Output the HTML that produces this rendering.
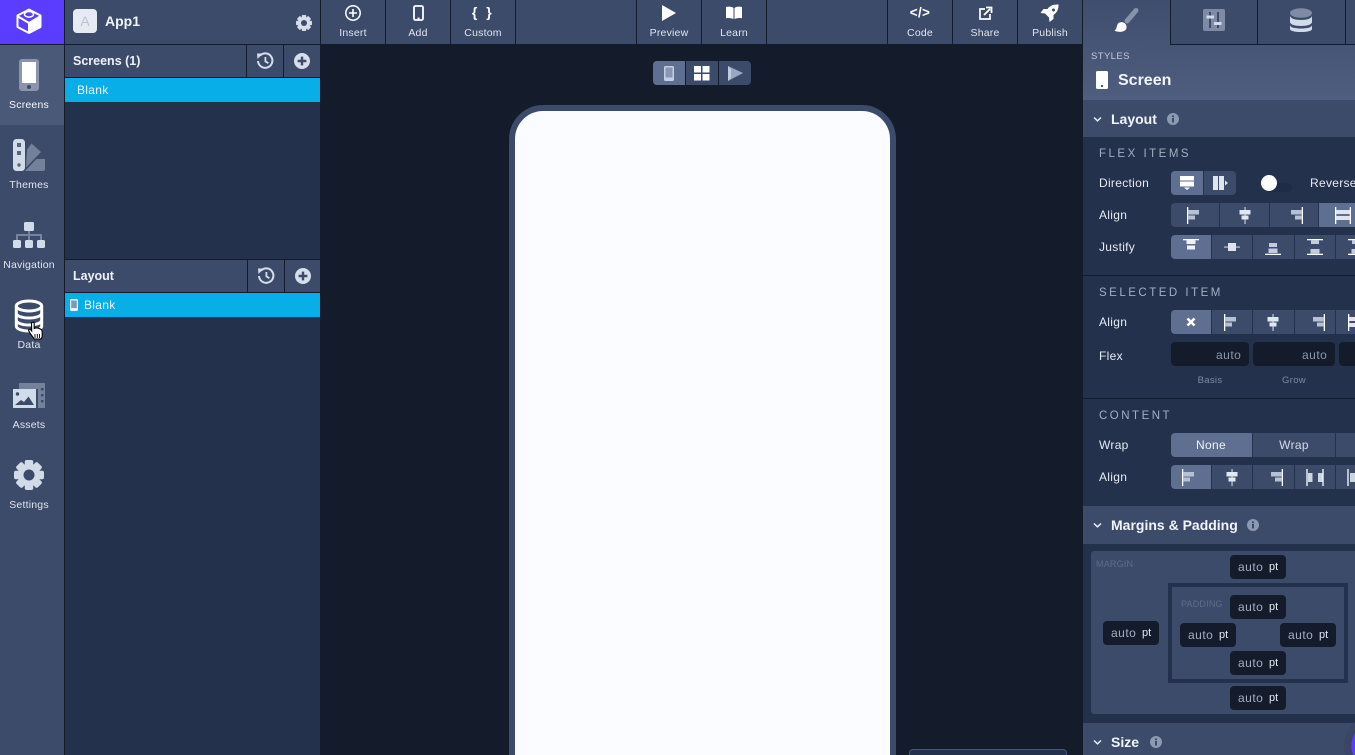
<!DOCTYPE html>
<html><head><meta charset="utf-8"><title>App1</title>
<style>
*{box-sizing:border-box;margin:0;padding:0}
html,body{width:1355px;height:755px;overflow:hidden;background:#141b2b;font-family:"Liberation Sans",sans-serif}
div{position:absolute}
#root{left:0;top:0;width:1355px;height:755px;overflow:hidden;background:#141b2b}
.t{white-space:nowrap;color:#e4e9f2;font-size:11px;line-height:14px;height:14px}
.c{transform:translateX(-50%)}
.l{font-size:10.5px;letter-spacing:.2px;color:#dfe5ee}
.h{font-size:12.5px;font-weight:bold;color:#eef1f6;line-height:16px;height:16px}
.hh{font-size:14px;font-weight:bold;color:#f1f4f8;line-height:18px;height:18px}
.lab{font-size:12px;color:#e6eaf1;letter-spacing:.3px;line-height:16px;height:16px}
.cap{font-size:11.5px;color:#a4aec2;letter-spacing:2.5px;line-height:14px;height:14px}
.sep{background:#141b2b}
.s{background:#3d4b6b;height:24px}
.a{background:#5f6f92}
.in{background:#141b2b;border-radius:4px;height:24px}
.u{width:56px;height:24px;background:#141b2b;border-radius:4px}
.u b{position:absolute;left:8px;top:5px;font:12px/14px "Liberation Sans",sans-serif;letter-spacing:.5px;color:#a4aec2}
.u i{position:absolute;left:39px;top:6px;font:normal 11px/13px "Liberation Sans",sans-serif;color:#e4e9f2}
svg{position:absolute;left:0;top:0}
</style></head><body>
<div id="root">

<!-- left rail -->
<div style="left:0;top:0;width:64px;height:755px;background:#3d4b6b"></div>
<div style="left:64px;top:0;width:1px;height:755px;background:#141b2b"></div>
<div style="left:0;top:0;width:64px;height:44px;background:#5b3dff"></div>
<div class="sep" style="left:0;top:44px;width:64px;height:1px"></div>
<div style="left:0;top:45px;width:64px;height:80px;background:#4b5978"></div>
<div class="t l c" style="left:29px;top:98px;color:#f6f8fb">Screens</div>
<div class="t l c" style="left:29px;top:178px">Themes</div>
<div class="t l c" style="left:29px;top:258px">Navigation</div>
<div class="t l c" style="left:29px;top:338px">Data</div>
<div class="t l c" style="left:29px;top:418px">Assets</div>
<div class="t l c" style="left:29px;top:498px">Settings</div>

<!-- secondary panel -->
<div style="left:65px;top:0;width:255px;height:755px;background:#24314c"></div>
<div style="left:65px;top:0;width:255px;height:44px;background:#3d4b6b"></div>
<div class="sep" style="left:65px;top:44px;width:255px;height:1px"></div>
<div style="left:320px;top:0;width:1px;height:755px;background:#141b2b"></div>
<div class="t c" style="left:85px;top:13px;font-size:14px;line-height:16px;height:16px;color:#b9c4d6;z-index:3">A</div>
<div class="hh" style="left:105px;top:12px;font-size:14px">App1</div>

<div style="left:65px;top:45px;width:255px;height:32px;background:#3d4b6b"></div>
<div class="sep" style="left:65px;top:77px;width:255px;height:1px"></div>
<div class="sep" style="left:246px;top:45px;width:1px;height:32px"></div>
<div class="sep" style="left:283px;top:45px;width:1px;height:32px"></div>
<div class="h" style="left:73px;top:53px">Screens (1)</div>
<div style="left:65px;top:78px;width:255px;height:24px;background:#08aee8"></div>
<div class="t" style="left:77px;top:83px;font-size:12px;color:#eef8fd;letter-spacing:.3px">Blank</div>

<div class="sep" style="left:65px;top:259px;width:255px;height:1px"></div>
<div style="left:65px;top:260px;width:255px;height:32px;background:#3d4b6b"></div>
<div class="sep" style="left:65px;top:292px;width:255px;height:1px"></div>
<div class="sep" style="left:247px;top:260px;width:1px;height:32px"></div>
<div class="sep" style="left:284px;top:260px;width:1px;height:32px"></div>
<div class="h" style="left:73px;top:268px">Layout</div>
<div style="left:65px;top:293px;width:255px;height:24px;background:#08aee8"></div>
<div class="t" style="left:84px;top:298px;font-size:12px;color:#eef8fd;letter-spacing:.3px">Blank</div>

<!-- toolbar -->
<div style="left:321px;top:0;width:762px;height:44px;background:#3d4b6b"></div>
<div class="sep" style="left:385px;top:0;width:1px;height:44px"></div>
<div class="sep" style="left:450px;top:0;width:1px;height:44px"></div>
<div class="sep" style="left:515px;top:0;width:1px;height:44px"></div>
<div class="sep" style="left:636px;top:0;width:1px;height:44px"></div>
<div class="sep" style="left:701px;top:0;width:1px;height:44px"></div>
<div class="sep" style="left:766px;top:0;width:1px;height:44px"></div>
<div class="sep" style="left:887px;top:0;width:1px;height:44px"></div>
<div class="sep" style="left:952px;top:0;width:1px;height:44px"></div>
<div class="sep" style="left:1017px;top:0;width:1px;height:44px"></div>
<div class="sep" style="left:1082px;top:0;width:1px;height:44px"></div>
<div class="t l c" style="left:353px;top:26px">Insert</div>
<div class="t l c" style="left:418px;top:26px">Add</div>
<div class="t l c" style="left:483px;top:26px">Custom</div>
<div class="t l c" style="left:669px;top:26px">Preview</div>
<div class="t l c" style="left:734px;top:26px">Learn</div>
<div class="t l c" style="left:920px;top:26px">Code</div>
<div class="t l c" style="left:985px;top:26px">Share</div>
<div class="t l c" style="left:1050px;top:26px">Publish</div>
<div class="t c" style="left:483px;top:4px;font-size:14px;line-height:16px;height:16px;font-weight:bold;color:#fff;letter-spacing:2.5px;z-index:3">{ }</div>
<div class="t c" style="left:920px;top:5px;font-size:13.5px;line-height:16px;height:16px;font-weight:bold;color:#fff;letter-spacing:.3px;z-index:3">&lt;/&gt;</div>

<!-- canvas -->
<div style="left:653px;top:61px;width:98px;height:24px;background:#3d4b6b;border-radius:4px"></div>
<div class="a" style="left:653px;top:61px;width:32px;height:24px;border-radius:4px 0 0 4px"></div>
<div class="sep" style="left:685px;top:61px;width:1px;height:24px"></div>
<div class="sep" style="left:718px;top:61px;width:1px;height:24px"></div>
<div style="left:509px;top:105px;width:387px;height:650px;background:#fbfcff;border:6px solid #3d4b6b;border-bottom:0;border-radius:34px 34px 0 0"></div>
<div style="left:909px;top:749px;width:158px;height:6px;background:#24314c;border:1px solid #46557a;border-bottom:0;border-radius:4px 4px 0 0"></div>

<!-- right panel -->
<div style="left:1083px;top:0;width:272px;height:755px;background:#24314c"></div>
<div style="left:1083px;top:0;width:272px;height:100px;background:linear-gradient(#3f4d6e,#4f5d7e)"></div>
<div style="left:1171px;top:0;width:184px;height:44px;background:#3d4b6b"></div>
<div class="sep" style="left:1170px;top:0;width:1px;height:45px"></div>
<div class="sep" style="left:1170px;top:44px;width:185px;height:1px"></div>
<div class="sep" style="left:1257px;top:0;width:1px;height:44px"></div>
<div class="sep" style="left:1345px;top:0;width:1px;height:44px"></div>
<div class="t" style="left:1091px;top:50px;font-size:9.5px;letter-spacing:.4px;color:#c2cad9">STYLES</div>
<div class="t" style="left:1118px;top:71px;height:20px;line-height:20px;font-size:16px;font-weight:bold;color:#f1f4f8">Screen</div>

<div style="left:1083px;top:100px;width:272px;height:37px;background:#3d4b6b"></div>
<div class="hh" style="left:1111px;top:110px">Layout</div>
<div class="cap" style="left:1099px;top:147px">FLEX ITEMS</div>
<div class="lab" style="left:1099px;top:175px">Direction</div>
<div class="lab" style="left:1099px;top:207px">Align</div>
<div class="lab" style="left:1099px;top:239px">Justify</div>
<div class="lab" style="left:1310px;top:175px">Reverse</div>
<div class="s" style="left:1171px;top:171px;width:65px;border-radius:4px"></div>
<div class="a" style="left:1171px;top:171px;width:32px;height:24px;border-radius:4px 0 0 4px"></div>
<div class="sep" style="left:1203px;top:171px;width:1px;height:24px;background:#24314c"></div>
<div class="s" style="left:1171px;top:203px;width:48px;border-radius:4px 0 0 4px"></div>
<div class="s" style="left:1220px;top:203px;width:49px"></div>
<div class="s" style="left:1270px;top:203px;width:48px"></div>
<div class="s a" style="left:1319px;top:203px;width:36px"></div>
<div class="s a" style="left:1171px;top:235px;width:40px;border-radius:4px 0 0 4px"></div>
<div class="s" style="left:1212px;top:235px;width:40px"></div>
<div class="s" style="left:1253px;top:235px;width:41px"></div>
<div class="s" style="left:1295px;top:235px;width:40px"></div>
<div class="s" style="left:1336px;top:235px;width:19px"></div>
<div class="sep" style="left:1083px;top:275px;width:272px;height:1px"></div>

<div class="cap" style="left:1099px;top:286px">SELECTED ITEM</div>
<div class="lab" style="left:1099px;top:314px">Align</div>
<div class="lab" style="left:1099px;top:348px">Flex</div>
<div class="s a" style="left:1171px;top:310px;width:40px;border-radius:4px 0 0 4px"></div>
<div class="s" style="left:1212px;top:310px;width:40px"></div>
<div class="s" style="left:1253px;top:310px;width:41px"></div>
<div class="s" style="left:1295px;top:310px;width:40px"></div>
<div class="s" style="left:1336px;top:310px;width:19px"></div>
<div class="in" style="left:1171px;top:342px;width:78px"></div>
<div class="in" style="left:1253px;top:342px;width:82px"></div>
<div class="in" style="left:1339px;top:342px;width:16px;border-radius:4px 0 0 4px"></div>
<div class="t" style="left:1216px;top:348px;font-size:12px;letter-spacing:.5px;color:#8c97ad">auto</div>
<div class="t" style="left:1302px;top:348px;font-size:12px;letter-spacing:.5px;color:#8c97ad">auto</div>
<div class="t c" style="left:1210px;top:374px;font-size:9.5px;letter-spacing:.3px;color:#7f8aa3">Basis</div>
<div class="t c" style="left:1294px;top:374px;font-size:9.5px;letter-spacing:.3px;color:#7f8aa3">Grow</div>
<div class="sep" style="left:1083px;top:398px;width:272px;height:1px"></div>

<div class="cap" style="left:1099px;top:409px">CONTENT</div>
<div class="lab" style="left:1099px;top:437px">Wrap</div>
<div class="lab" style="left:1099px;top:469px">Align</div>
<div class="s a" style="left:1171px;top:433px;width:81px;border-radius:4px 0 0 4px"></div>
<div class="s" style="left:1253px;top:433px;width:82px"></div>
<div class="s" style="left:1336px;top:433px;width:19px"></div>
<div class="t c" style="left:1211px;top:438px;font-size:12px;letter-spacing:.3px;color:#eef1f6">None</div>
<div class="t c" style="left:1294px;top:438px;font-size:12px;letter-spacing:.3px;color:#d4dae6">Wrap</div>
<div class="s a" style="left:1171px;top:465px;width:40px;border-radius:4px 0 0 4px"></div>
<div class="s" style="left:1212px;top:465px;width:40px"></div>
<div class="s" style="left:1253px;top:465px;width:41px"></div>
<div class="s" style="left:1295px;top:465px;width:40px"></div>
<div class="s" style="left:1336px;top:465px;width:19px"></div>

<div style="left:1083px;top:506px;width:272px;height:38px;background:#3d4b6b"></div>
<div class="hh" style="left:1111px;top:516px">Margins &amp; Padding</div>
<div style="left:1091px;top:551px;width:264px;height:163px;background:#3d4b6b;border-radius:3px 0 0 3px"></div>
<div class="t" style="left:1096px;top:557px;font-size:9px;letter-spacing:.2px;color:#5f6c88">MARGIN</div>
<div style="left:1168px;top:583px;width:180px;height:100px;border:4px solid #24314c"></div>
<div class="t" style="left:1181px;top:597px;font-size:9px;letter-spacing:.2px;color:#5f6c88">PADDING</div>
<div class="u" style="left:1230px;top:555px"><b>auto</b><i>pt</i></div>
<div class="u" style="left:1103px;top:621px"><b>auto</b><i>pt</i></div>
<div class="u" style="left:1230px;top:595px"><b>auto</b><i>pt</i></div>
<div class="u" style="left:1180px;top:623px"><b>auto</b><i>pt</i></div>
<div class="u" style="left:1280px;top:623px"><b>auto</b><i>pt</i></div>
<div class="u" style="left:1230px;top:651px"><b>auto</b><i>pt</i></div>
<div class="u" style="left:1230px;top:686px"><b>auto</b><i>pt</i></div>

<div style="left:1083px;top:723px;width:272px;height:32px;background:#3d4b6b"></div>
<div class="t" style="left:1111px;top:733px;height:18px;line-height:18px;font-size:14px;font-weight:bold;color:#f1f4f8">Size</div>

<!-- icons -->
<svg width="1355" height="755" viewBox="0 0 1355 755" style="z-index:2;overflow:hidden">
<defs>
<symbol id="al" viewBox="0 0 18 18"><rect x="1" y="0" width="1.300" height="17" fill="#fff"/><rect x="2" y="3" width="11" height="4.500" fill="#b6c1d3"/><rect x="2" y="8.500" width="7" height="4" fill="#b6c1d3"/></symbol>
<symbol id="ac" viewBox="0 0 18 18"><rect x="8.400" y="0" width="1.300" height="17" fill="#b6c1d3"/><rect x="3.500" y="3" width="11" height="4.500" fill="#e2e8f1"/><rect x="5.500" y="8.500" width="7" height="4" fill="#e2e8f1"/></symbol>
<symbol id="ar" viewBox="0 0 18 18"><rect x="15.700" y="0" width="1.300" height="17" fill="#fff"/><rect x="5" y="3" width="11" height="4.500" fill="#b6c1d3"/><rect x="9" y="8.500" width="7" height="4" fill="#b6c1d3"/></symbol>
<symbol id="as" viewBox="0 0 18 18"><rect x="1" y="0" width="1.300" height="17" fill="#fff"/><rect x="15.700" y="0" width="1.300" height="17" fill="#fff"/><rect x="2" y="3" width="14" height="4" fill="#dfe5ee"/><rect x="2" y="9" width="14" height="4" fill="#dfe5ee"/></symbol>
<symbol id="jt" viewBox="0 0 18 18"><rect x="1" y="1" width="16" height="1.300" fill="#fff"/><rect x="4.500" y="2" width="9" height="4" fill="#eef1f6"/><rect x="5" y="7.500" width="8" height="4" fill="#eef1f6"/></symbol>
<symbol id="jc" viewBox="0 0 18 18"><rect x="1" y="8.400" width="16" height="1.300" fill="#b6c1d3"/><rect x="5" y="5" width="8" height="8" fill="#dfe5ee"/></symbol>
<symbol id="jb" viewBox="0 0 18 18"><rect x="1" y="15.700" width="16" height="1.300" fill="#fff"/><rect x="5" y="5" width="8" height="4" fill="#c2ccdb"/><rect x="4.500" y="10.500" width="9" height="4.500" fill="#c2ccdb"/></symbol>
<symbol id="jb2" viewBox="0 0 18 18"><rect x="1" y="1" width="16" height="1.300" fill="#fff"/><rect x="1" y="15.700" width="16" height="1.300" fill="#fff"/><rect x="5" y="2" width="8" height="4" fill="#c2ccdb"/><rect x="4.500" y="11" width="9" height="4.500" fill="#c2ccdb"/></symbol>
<symbol id="hist" viewBox="0 0 18 18"><path d="M4 3.600A7.200 7.200 0 1 1 2 9" fill="none" stroke="#d6deea" stroke-width="2"/><path d="M1 1.500 L6.800 1.500 L1.500 7Z" fill="#d6deea"/><path d="M9.400 5v4.400l3 1.800" fill="none" stroke="#d6deea" stroke-width="1.800"/></symbol>
<symbol id="plus" viewBox="0 0 16 16"><circle cx="8" cy="8" r="8" fill="#d6deea"/><path d="M8 3.600v8.800M3.600 8h8.800" stroke="#3d4b6b" stroke-width="2.400"/></symbol>
<symbol id="gear" viewBox="-16 -16 32 32"><g fill="currentColor"><circle r="12"/><rect x="-4.500" y="-16" width="9" height="32" rx="2"/><rect x="-4.500" y="-16" width="9" height="32" rx="2" transform="rotate(45)"/><rect x="-4.500" y="-16" width="9" height="32" rx="2" transform="rotate(90)"/><rect x="-4.500" y="-16" width="9" height="32" rx="2" transform="rotate(135)"/></g></symbol>
<symbol id="info" viewBox="0 0 12 12"><circle cx="6" cy="6" r="6" fill="#8d99b2"/><rect x="5" y="5" width="2" height="4.500" fill="#3d4b6b"/><rect x="5" y="2.400" width="2" height="1.800" fill="#3d4b6b"/></symbol>
</defs>

<!-- logo -->
<g fill="none" stroke="#fff" stroke-width="2" stroke-linejoin="round">
<path d="M29 9.500 40.500 15.500V27L29 33 17.500 27V15.500Z"/><path d="M18 16.500 29 23 40 16.500M29 23V33"/>
</g>
<path d="M29 23 40.500 16V27L29 33Z" fill="#fff"/>
<ellipse cx="29" cy="14.300" rx="4.500" ry="2.800" fill="none" stroke="#fff" stroke-width="1.500"/>

<!-- Screens -->
<rect x="19" y="59" width="20" height="32" rx="3" fill="#8c94ac"/><rect x="22" y="62" width="14" height="21" fill="#fff"/><circle cx="29" cy="87" r="2" fill="#3d4b6b"/>
<!-- Themes -->
<path d="M27 149.500 31.500 143.500 41 152 38 155 26 167.500z" fill="#74819b"/><path d="M36.500 159H45V169a2 2 0 0 1-2 2H25z" fill="#74819b"/>
<rect x="13" y="139" width="12" height="32" rx="3.500" fill="#d2dbe8"/><rect x="17" y="143" width="4" height="4" fill="#55637f"/><rect x="17" y="151" width="4" height="4" fill="#55637f"/><circle cx="19" cy="165" r="1.700" fill="#55637f"/>
<!-- Navigation -->
<path d="M29 230v10M17 241v-6h24v6" fill="none" stroke="#78849d" stroke-width="2"/>
<rect x="24" y="222" width="10" height="9" rx="1.500" fill="#d2dbe8"/><rect x="13" y="240" width="8" height="8" rx="1.500" fill="#d2dbe8"/><rect x="25" y="240" width="8" height="8" rx="1.500" fill="#d2dbe8"/><rect x="37" y="240" width="8" height="8" rx="1.500" fill="#d2dbe8"/>
<!-- Data -->
<g fill="none" stroke="#fff" stroke-width="3">
<ellipse cx="29" cy="306" rx="12.700" ry="5"/><path d="M16.300 306v20c0 3 5.700 5 12.700 5s12.700-2 12.700-5v-20M16.300 313c0 3 5.700 5 12.700 5s12.700-2 12.700-5M16.300 320c0 3 5.700 5 12.700 5s12.700-2 12.700-5"/>
</g>
<!-- cursor -->
<path d="M31.500 323.500c0-1.800 2.700-1.800 2.700 0v5l1.800-.6 1.800.2 1.700.4 1.700 1c.8.600 1 1.500 1 2.500v4c0 1.500-.8 2.500-1.500 3h-6.500l-4.500-6.300-1-2.200c-.4-1.200 1.200-1.800 2-.8l1 1.300z" fill="#fff" stroke="#000" stroke-width="1.100"/>
<path d="M35 334v4M37.300 334v4M39.500 334v4" stroke="#000" stroke-width=".9"/>
<!-- Assets -->
<path d="M19 383h26v25H38V389H19z" fill="#74819b"/><rect x="41" y="388" width="2.500" height="2.500" fill="#3d4b6b"/><rect x="41" y="394" width="2.500" height="2.500" fill="#3d4b6b"/><rect x="41" y="400" width="2.500" height="2.500" fill="#3d4b6b"/>
<rect x="13" y="389" width="23" height="19" fill="#d2dbe8"/><circle cx="17.500" cy="394" r="1.700" fill="#3d4b6b"/><path d="M15 405l6-5 3 2 4.500-5.500 5.500 8.500z" fill="#3d4b6b"/>
<!-- Settings -->
<use href="#gear" x="14" y="460" width="30" height="30" color="#d2dbe8"/><circle cx="29" cy="475" r="5.500" fill="#3d4b6b"/>

<!-- App tile -->
<rect x="73" y="9" width="24" height="24" rx="4" fill="#e6ebf3"/>
<use href="#gear" x="296" y="15" width="16" height="16" color="#d6deea"/><circle cx="304" cy="23" r="3" fill="#3d4b6b"/>
<use href="#hist" x="256" y="52" width="18" height="18"/><use href="#plus" x="294" y="53" width="16" height="16"/>
<use href="#hist" x="257" y="267" width="18" height="18"/><use href="#plus" x="295" y="268" width="16" height="16"/>
<rect x="70" y="299" width="8" height="12" rx="1.200" fill="#e8f4fb"/><rect x="71.200" y="300.500" width="5.600" height="7.500" fill="#8795b7"/>

<!-- toolbar icons -->
<circle cx="353" cy="13" r="7.200" fill="none" stroke="#fff" stroke-width="1.500"/><path d="M353 9v8M349 13h8" stroke="#fff" stroke-width="1.600"/>
<rect x="414" y="6" width="9" height="14" rx="1.500" fill="none" stroke="#fff" stroke-width="1.800"/><rect x="417.500" y="17.500" width="2" height="2" fill="#fff"/>
<path d="M662 5 676 13 662 21Z" fill="#fff"/>
<path d="M726 7c3-.8 6-.5 7.500 1v11c-2-1-5-1.300-7.500-.8zM742 7c-3-.8-6-.5-7.500 1v11c2-1 5-1.300 7.500-.8z" fill="#fff"/>
<path d="M985 9h-5v10h10v-5" fill="none" stroke="#fff" stroke-width="1.700"/><path d="M984 15l6-6M986 7.500h5.500V13" fill="none" stroke="#fff" stroke-width="1.800"/>
<path d="M1058.500 4.500c-5-.3-8.500 1-11 4.500h-4l-3 4 4.500.5 4 4 .5 4.500 4-3v-4c3.500-2.500 5.200-5.500 5-10.500z" fill="#fff"/><circle cx="1053.500" cy="10" r="1.500" fill="#3d4b6b"/>

<!-- device switcher -->
<rect x="664" y="66" width="10" height="15" rx="1.500" fill="#c5cfe0"/><rect x="665.500" y="67.500" width="7" height="10" fill="#8795b7"/>
<path d="M694 66h7v6.500h-7zM702.500 66h7v6.500h-7zM694 74h7v6.500h-7zM702.500 74h7v6.500h-7z" fill="#fff"/>
<path d="M728 66 743 73 728 81Z" fill="#9aa8c4"/><path d="M728 66 731 69V78L728 81Z" fill="#c0cbde"/>

<!-- right tabs -->
<path d="M1127 21 1136 10.500" stroke="#8793ab" stroke-width="5" stroke-linecap="round"/><path d="M1118 23.500c2-1.800 5-1.800 7 0 2 2 2 5 .5 6.500-2 2-7 2.500-11 .8 2.200-1.300 2-5 3.500-7.300z" fill="#fff"/>
<rect x="1203" y="9" width="22" height="22" rx="2" fill="#7f8ba4"/>
<path d="M1210 12v16M1218 12v16" stroke="#3d4b6b" stroke-width="2"/><rect x="1206.500" y="15.500" width="7.500" height="3" fill="#d2dbe8"/><rect x="1214" y="22" width="7.500" height="3" fill="#d2dbe8"/>
<ellipse cx="1301" cy="13" rx="11" ry="4.800" fill="#7f8ba4"/><path d="M1290 15.500c0 3 5 4.500 11 4.500s11-1.500 11-4.500V22c0 2.500-5 4-11 4s-11-1.500-11-4z" fill="#d2dbe8"/><path d="M1290 25c0 2.500 5 3.500 11 3.500s11-1 11-3.500v4c0 2-5 3-11 3s-11-1-11-3z" fill="#d2dbe8"/>

<!-- Screen title -->
<rect x="1096" y="71" width="12" height="18" rx="1.500" fill="#fff"/><rect x="1101" y="85" width="2" height="2" fill="#4b5978"/>

<!-- chevrons + info -->
<g fill="none" stroke="#e8ecf3" stroke-width="1.500"><path d="M1094 117.500l3.500 3.300 3.500-3.300"/><path d="M1094 523.500l3.500 3.300 3.500-3.300"/><path d="M1094 740.500l3.500 3.300 3.500-3.300"/></g>
<use href="#info" x="1167" y="113" width="12" height="12"/><use href="#info" x="1247" y="519" width="12" height="12"/><use href="#info" x="1150" y="736" width="12" height="12"/>

<!-- Direction -->
<path d="M1180 176h14v4.500h-14zM1180 181.500h14v5h-14z" fill="#fff"/><path d="M1184 187.500h6l-3 2.500z" fill="#fff"/>
<path d="M1213 176h5v14h-5zM1219 176h5v14h-5z" fill="#dfe5ee"/><path d="M1225 180.500l3 2.500-3 2.500z" fill="#dfe5ee"/>
<!-- toggle -->
<rect x="1264" y="183" width="28" height="9" rx="4.500" fill="#202c46"/>
<circle cx="1269" cy="183" r="8" fill="#fff"/>

<!-- Align rows -->
<use href="#al" x="1186" y="207" width="18" height="18"/><use href="#ac" x="1236" y="207" width="18" height="18"/><use href="#ar" x="1286" y="207" width="18" height="18"/><use href="#as" x="1334" y="207" width="18" height="18"/>
<use href="#jt" x="1182" y="238" width="18" height="18"/><use href="#jc" x="1223" y="238" width="18" height="18"/><use href="#jb" x="1264" y="238" width="18" height="18"/><use href="#jb2" x="1306" y="238" width="18" height="18"/><use href="#jb2" x="1347" y="238" width="18" height="18"/>

<path d="M1187.500 318.500l7 7M1194.500 318.500l-7 7" stroke="#fff" stroke-width="2.600"/>
<use href="#al" x="1223" y="314" width="18" height="18"/><use href="#ac" x="1264" y="314" width="18" height="18"/><use href="#ar" x="1308" y="314" width="18" height="18"/><use href="#as" x="1347" y="314" width="18" height="18"/>

<use href="#al" x="1181" y="469" width="18" height="18"/><use href="#ac" x="1223" y="469" width="18" height="18"/><use href="#ar" x="1266" y="469" width="18" height="18"/>
<path d="M1307 469v17M1323 469v17" stroke="#fff" stroke-width="1.300"/><path d="M1308 473h4.500v9H1308zM1318 473h4.500v9H1318z" fill="#ccd5e3"/>
<path d="M1348 469v17" stroke="#fff" stroke-width="1.300"/><rect x="1350" y="473" width="5" height="9" fill="#ccd5e3"/>

<!-- purple bubble -->
<path d="M1355 722a33 33 0 0 0-10 33h10z" fill="#3a4664"/>
<path d="M1355 733a25 25 0 0 0-2 22h2z" fill="#5b3dff"/>
</svg>
</div>
</body></html>
